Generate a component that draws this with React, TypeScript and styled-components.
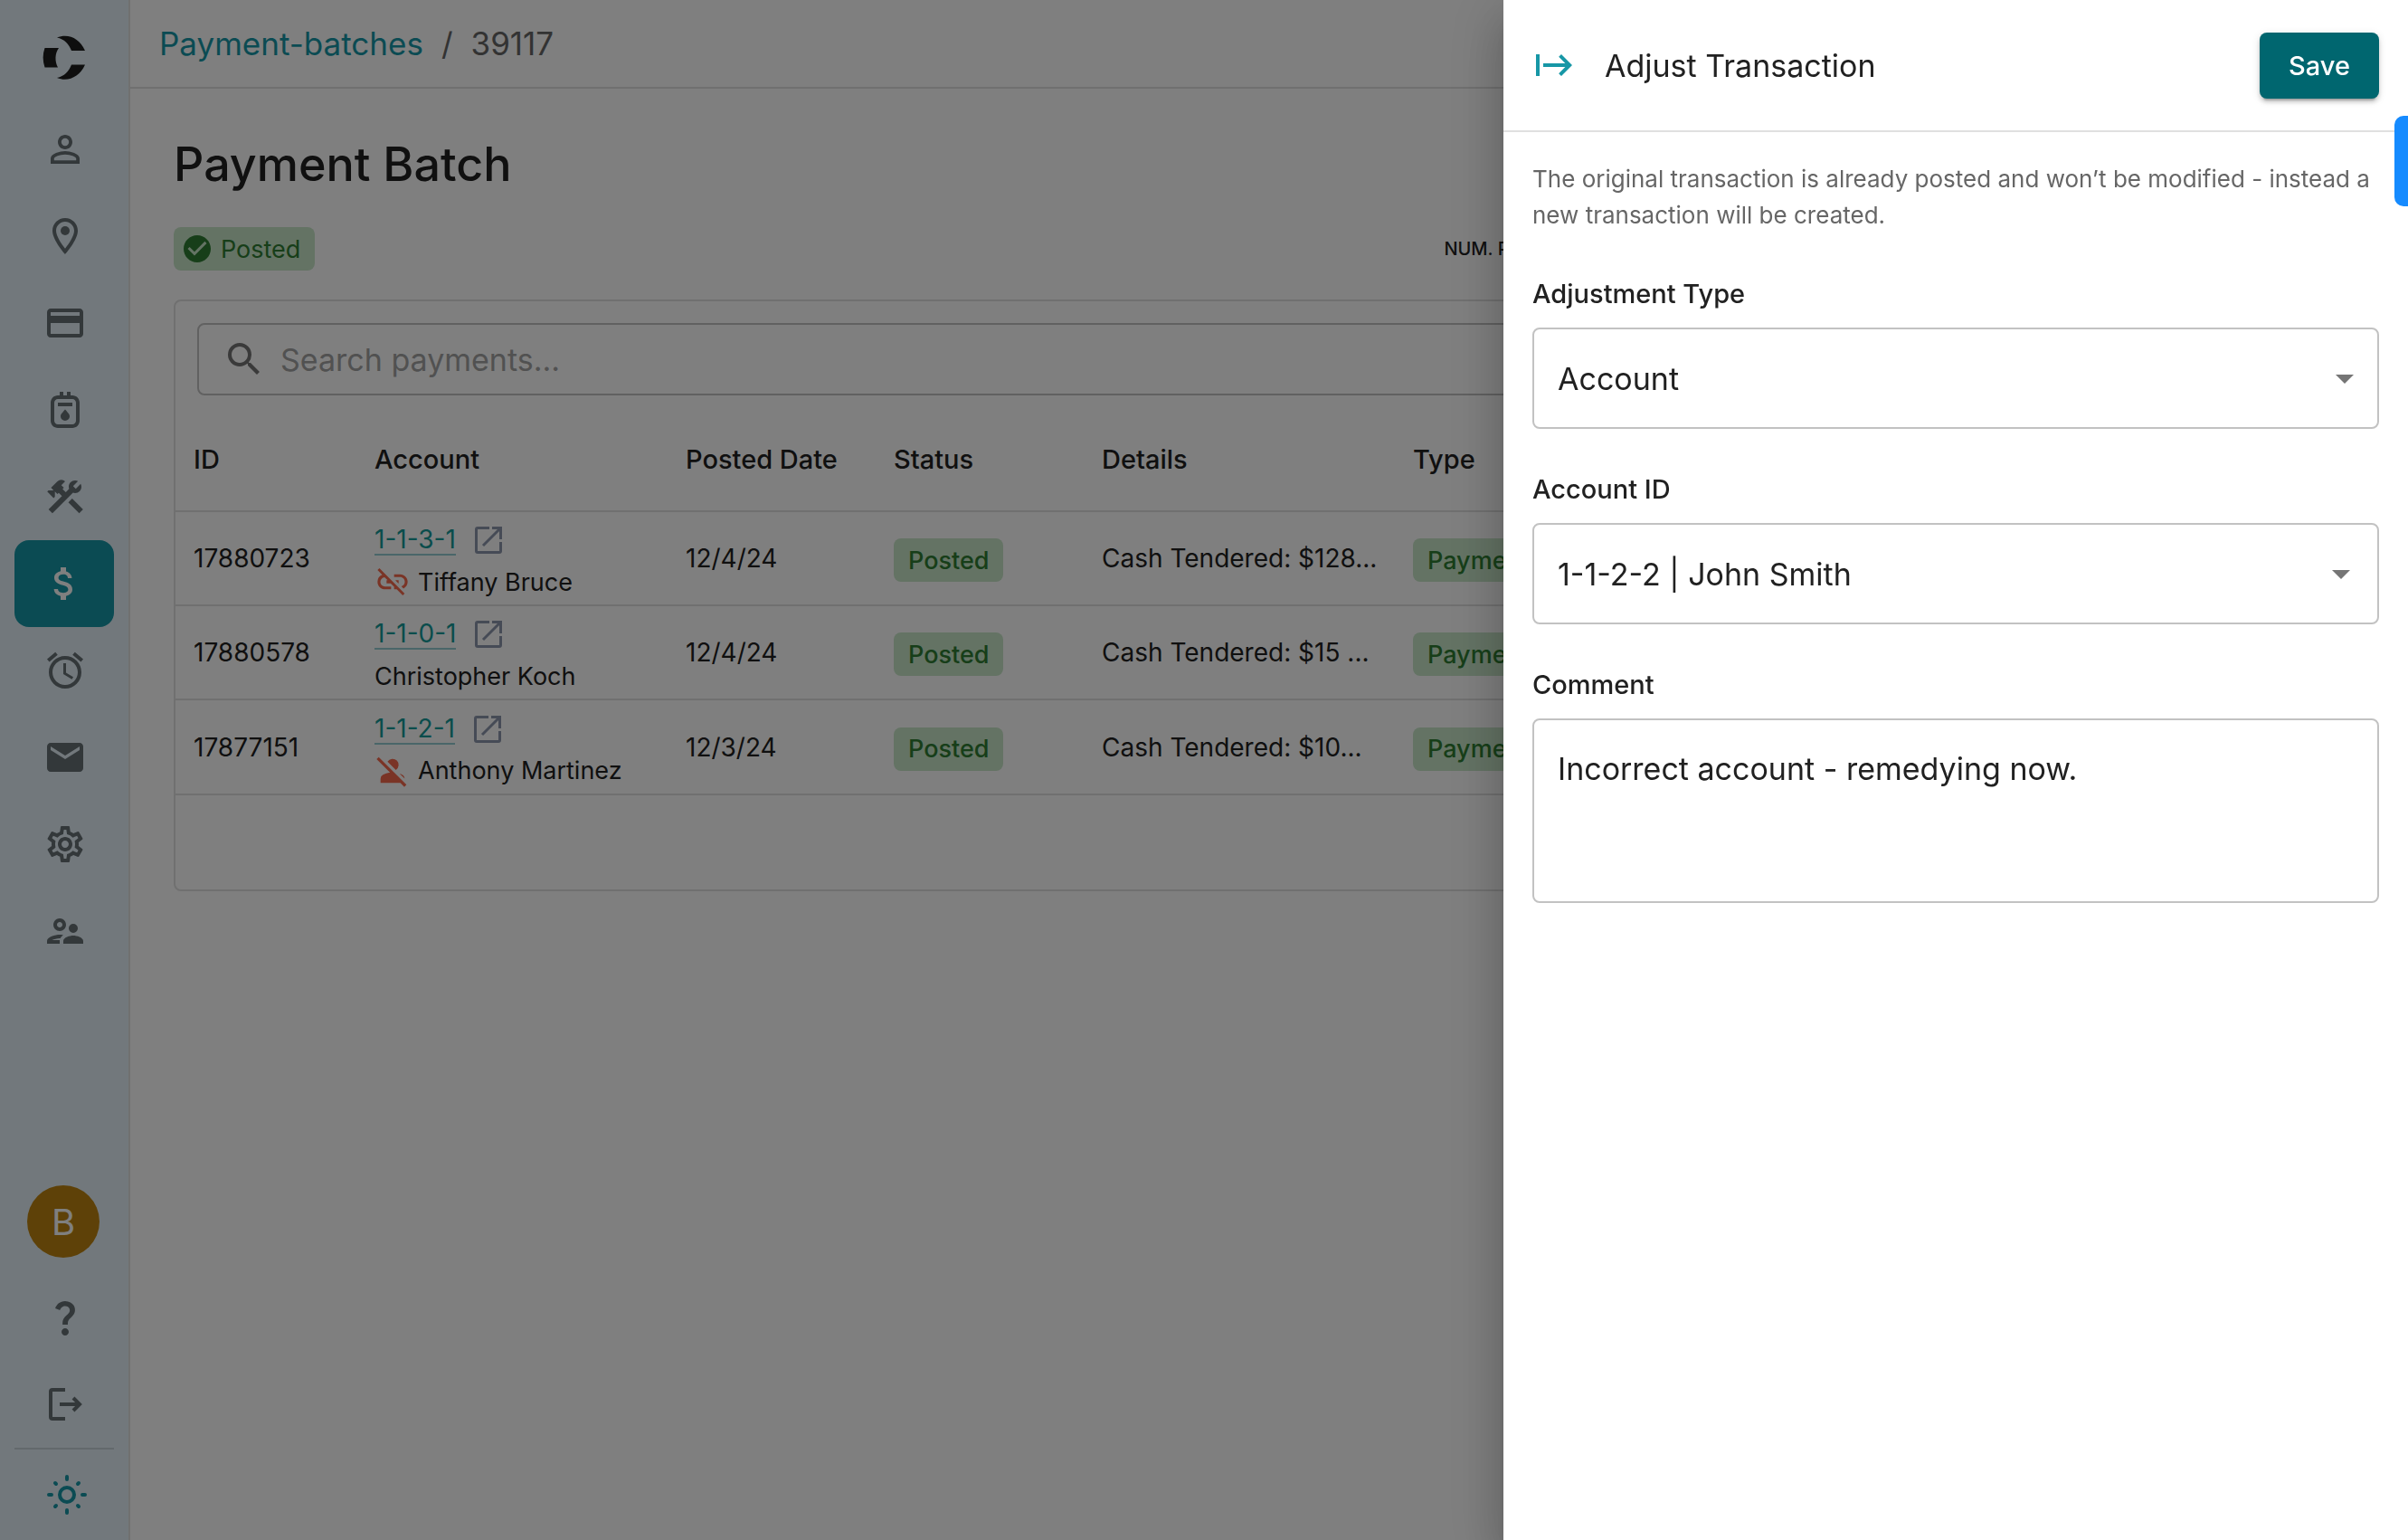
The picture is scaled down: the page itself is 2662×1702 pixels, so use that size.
import React, { useState } from "react";
import styled, { createGlobalStyle } from "styled-components";
import {
  MdPersonOutline,
  MdOutlineLocationOn,
  MdPayment,
  MdOutlineGasMeter,
  MdConstruction,
  MdAttachMoney,
  MdAlarm,
  MdEmail,
  MdOutlineSettings,
  MdOutlineSupervisorAccount,
  MdQuestionMark,
  MdSearch,
  MdCheckCircle,
  MdStart,
  MdLinkOff,
  MdPersonOff,
  MdArrowDropDown,
} from "react-icons/md";

const color = {
  text: "#212121",
  muted: "#666666",
  teal: "#1797a6",
  tealDark: "#00666f",
  link: "#149a98",
  line: "#e0e0e0",
  input: "#c2c2c2",
  green: "#2e7d32",
  greenSoft: "#c8e6c9",
  red: "#f4694c",
};

const GlobalStyle = createGlobalStyle`
  *, *::before, *::after { box-sizing: border-box; }
  body {
    margin: 0;
    overflow: hidden;
    background: #ffffff;
    color: ${color.text};
    font-family: Inter, Roboto, "Liberation Sans", sans-serif;
    font-size: 28px;
  }
  button, input, select, textarea { font: inherit; color: inherit; }
`;

const Shell = styled.div`
  display: flex;
  height: 100vh;
`;

const Sidebar = styled.aside`
  display: flex;
  flex-direction: column;
  flex: none;
  width: 144px;
  padding: 36px 16px 2px;
  background: #e4f1f8;
  border-right: 2px solid ${color.line};
`;

const LogoLink = styled.a`
  display: flex;
  justify-content: center;
  margin-bottom: 25px;
  color: #1c1c1c;
`;

const NavList = styled.nav`
  display: flex;
  flex-direction: column;
`;

const NavButton = styled.button<{ $active?: boolean }>`
  display: flex;
  align-items: center;
  justify-content: center;
  width: 110px;
  height: 96px;
  padding: 0 0 0 ${(p) => (p.$active ? 0 : 2)}px;
  border: 0;
  border-radius: 16px;
  background: ${(p) => (p.$active ? color.teal : "transparent")};
  color: ${(p) => (p.$active ? "#ffffff" : "#667075")};
  cursor: pointer;
`;

const NavFooter = styled.div`
  display: flex;
  flex-direction: column;
  margin-top: auto;
`;

const Avatar = styled.button`
  align-self: center;
  width: 80px;
  height: 80px;
  margin: 0 2px 18px 0;
  padding: 0;
  border: 0;
  border-radius: 50%;
  background: #bd8310;
  color: #ffffff;
  font-size: 40px;
`;

const ThemeRow = styled.div`
  padding-top: 2px;
  border-top: 2px solid #c6d2d8;
  color: ${color.teal};

  ${NavButton} {
    padding-left: 6px;
    color: inherit;
  }
`;

const Main = styled.main`
  flex: 1;
  min-width: 0;
`;

const TopBar = styled.header`
  display: flex;
  align-items: center;
  height: 98px;
  padding: 0 32px;
  border-bottom: 2px solid ${color.line};
`;

const Crumbs = styled.ol`
  display: flex;
  gap: 20px;
  margin: 0;
  padding: 0;
  list-style: none;
  color: ${color.muted};
  font-size: 35px;
  line-height: 48px;
`;

const CrumbLink = styled.a`
  color: ${color.teal};
  text-decoration: none;
`;

const Content = styled.div`
  padding: 48px;
`;

const PageTitle = styled.h1`
  margin: 0 0 33px;
  font-size: 52px;
  font-weight: 500;
  line-height: 72px;
`;

const SummaryRow = styled.div`
  display: flex;
  align-items: center;
  margin-bottom: 32px;
`;

const SummaryLabel = styled.span`
  margin-left: 1248px;
  font-size: 20px;
  font-weight: 500;
  text-transform: uppercase;
  white-space: nowrap;
`;

const Chip = styled.span<{ $strong?: boolean }>`
  display: inline-flex;
  align-items: center;
  gap: 8px;
  height: 48px;
  padding: 0 16px 0 ${(p) => (p.$strong ? 16 : 8)}px;
  border-radius: 8px;
  background: ${color.greenSoft};
  color: ${color.green};
  font-size: 27px;
  font-weight: ${(p) => (p.$strong ? 500 : 400)};
`;

const Card = styled.section`
  border: 2px solid ${color.line};
  border-radius: 8px;
`;

const SearchBox = styled.label`
  display: flex;
  align-items: center;
  gap: 16px;
  height: 80px;
  margin: 24px 24px 32px;
  padding: 0 26px;
  border: 2px solid ${color.input};
  border-radius: 8px;
  color: #757575;
`;

const SearchInput = styled.input`
  flex: 1;
  padding: 0;
  border: 0;
  outline: 0;
  background: transparent;
  font-size: 34px;

  &::placeholder {
    color: #a3a3a3;
    opacity: 1;
  }
`;

const Table = styled.table`
  width: 100%;
  border-collapse: collapse;
  table-layout: fixed;
`;

const Th = styled.th<{ $width?: number }>`
  width: ${(p) => (p.$width ? `${p.$width}px` : "auto")};
  height: 96px;
  padding: 0 20px 18px;
  text-align: left;
  font-size: 29px;
  font-weight: 500;
`;

const Tr = styled.tr`
  height: 104px;
  border-top: 2px solid ${color.line};
`;

const Td = styled.td<{ $drop?: number }>`
  padding: ${(p) => p.$drop ?? 0}px 20px 0;
  white-space: nowrap;
`;

const CardFooter = styled.footer`
  height: 106px;
  border-top: 2px solid ${color.line};
`;

const Stack = styled.div`
  display: flex;
  flex-direction: column;
`;

const Line = styled.div<{ $small?: boolean }>`
  display: flex;
  align-items: center;
  gap: ${(p) => (p.$small ? 8 : 20)}px;
  height: 46px;
  font-size: ${(p) => (p.$small ? 27 : 28)}px;

  a {
    color: ${color.link};
    text-decoration: none;
    border-bottom: 2px solid #95ccd3;
    line-height: 32px;
  }
`;

const LinkButton = styled.button`
  display: flex;
  padding: 0;
  border: 0;
  background: none;
  color: #8d97ac;
`;

const Flag = styled.span`
  display: flex;
  width: 40px;
  color: ${color.red};
`;

const Backdrop = styled.div`
  position: fixed;
  inset: 0;
  display: flex;
  justify-content: flex-end;
  background: rgba(0, 0, 0, 0.5);
`;

const Drawer = styled.form`
  width: 1000px;
  height: 100%;
  background: #ffffff;
  box-shadow: 0 16px 20px -10px rgba(0, 0, 0, 0.2),
    0 32px 48px 4px rgba(0, 0, 0, 0.14), 0 12px 60px 10px rgba(0, 0, 0, 0.12);
`;

const DrawerHeader = styled.header`
  display: flex;
  align-items: center;
  height: 146px;
  padding: 0 32px;
  border-bottom: 2px solid ${color.line};
`;

const CloseButton = styled.button`
  display: flex;
  margin-right: 32px;
  padding: 0;
  border: 0;
  background: none;
  color: ${color.teal};
`;

const DrawerTitle = styled.h2`
  flex: 1;
  margin: 0;
  font-size: 34px;
  font-weight: 400;
`;

const SaveButton = styled.button`
  height: 73px;
  padding: 0 32px;
  border: 0;
  border-radius: 8px;
  background: ${color.tealDark};
  color: #ffffff;
  font-size: 29px;
  font-weight: 500;
  box-shadow: 0 6px 2px -4px rgba(0, 0, 0, 0.2),
    0 4px 4px rgba(0, 0, 0, 0.14), 0 2px 10px rgba(0, 0, 0, 0.12);
`;

const DrawerBody = styled.div`
  display: flex;
  flex-direction: column;
  gap: 46px;
  padding: 32px;
`;

const Note = styled.p`
  margin: 0;
  color: ${color.muted};
  font-size: 26px;
  line-height: 40px;
`;

const Field = styled.div`
  display: flex;
  flex-direction: column;
  gap: 16px;
`;

const Label = styled.label`
  font-size: 29px;
  font-weight: 500;
  line-height: 42px;
`;

const SelectWrap = styled.div<{ $inset?: number }>`
  display: grid;
  align-items: center;

  > * {
    grid-area: 1 / 1;
  }

  svg {
    justify-self: end;
    margin-right: ${(p) => p.$inset ?? 14}px;
    color: #757575;
    pointer-events: none;
  }
`;

const Select = styled.select`
  width: 100%;
  height: 112px;
  padding: 0 26px;
  border: 2px solid ${color.input};
  border-radius: 8px;
  background: transparent;
  font-size: 34px;
  appearance: none;
`;

const TextArea = styled.textarea`
  width: 100%;
  height: 204px;
  padding: 30px 26px;
  border: 2px solid ${color.input};
  border-radius: 8px;
  font-size: 34px;
  line-height: 48px;
  resize: none;
`;

const EdgeTab = styled.button`
  position: fixed;
  top: 128px;
  right: 0;
  width: 15px;
  height: 100px;
  padding: 0;
  border: 0;
  border-radius: 10px 0 0 10px;
  background: #168bff;
`;

const Logo = () => (
  <svg width="52" height="56" viewBox="0 0 52 56" aria-hidden="true">
    <path
      fill="currentColor"
      d="M18 5.500C30 .5 43 6 49 20H34C31 12 26 7.500 18 5.500ZM4.500 17H20C15.500 23 15.500 32 19 38.500H4.500C2 31 2 24 4.500 17ZM34 35.500H49C43 49 30 55 18 50C26 48 31 43.500 34 35.500Z"
    />
  </svg>
);

const LogoutIcon = () => (
  <svg width="48" height="48" viewBox="0 0 48 48" fill="none" stroke="currentColor" strokeWidth="4" aria-hidden="true">
    <path d="M24 8H10Q8 8 8 10V38Q8 40 10 40H24M18 24H40M33 17L40 24L33 31" />
  </svg>
);

const SunIcon = () => (
  <svg width="48" height="48" viewBox="0 0 48 48" fill="none" stroke="currentColor" strokeWidth="4" strokeLinecap="round" aria-hidden="true">
    <circle cx="24" cy="24" r="8" />
    <path d="M24 4V7M24 41V44M4 24H7M41 24H44M11 11L12 12M36 36L37 37M37 11L36 12M12 36L11 37" />
  </svg>
);

const OpenIcon = () => (
  <svg width="32" height="32" viewBox="0 0 32 32" fill="none" stroke="currentColor" strokeWidth="3" aria-hidden="true">
    <path d="M17 2.500H4Q2.500 2.500 2.500 4V28Q2.500 29.500 4 29.500H28Q29.500 29.500 29.500 28V18M20 2.500H29.500V15M29 3L10 22" />
  </svg>
);

const navItems = [
  { name: "People", Icon: MdPersonOutline },
  { name: "Locations", Icon: MdOutlineLocationOn },
  { name: "Accounts", Icon: MdPayment },
  { name: "Meters", Icon: MdOutlineGasMeter },
  { name: "Service", Icon: MdConstruction },
  { name: "Payments", Icon: MdAttachMoney },
  { name: "Schedules", Icon: MdAlarm },
  { name: "Messages", Icon: MdEmail },
  { name: "Settings", Icon: MdOutlineSettings },
  { name: "Users", Icon: MdOutlineSupervisorAccount },
];

const columns = [
  { name: "ID", width: 200 },
  { name: "Account", width: 344 },
  { name: "Posted Date", width: 230 },
  { name: "Status", width: 230 },
  { name: "Details", width: 344 },
  { name: "Type" },
];

const payments = [
  { id: "17880723", account: "1-1-3-1", person: "Tiffany Bruce", Icon: MdLinkOff, date: "12/4/24", details: "Cash Tendered: $128..." },
  { id: "17880578", account: "1-1-0-1", person: "Christopher Koch", Icon: null, date: "12/4/24", details: "Cash Tendered: $15 ..." },
  { id: "17877151", account: "1-1-2-1", person: "Anthony Martinez", Icon: MdPersonOff, date: "12/3/24", details: "Cash Tendered: $10..." },
];

export default function App() {
  const [comment, setComment] = useState("Incorrect account - remedying now.");

  return (
    <>
      <GlobalStyle />
      <Shell>
        <Sidebar>
          <LogoLink href="#" aria-label="Home">
            <Logo />
          </LogoLink>
          <NavList>
            {navItems.map(({ name, Icon }) => (
              <NavButton key={name} $active={name === "Payments"} aria-label={name}>
                <Icon size={48} />
              </NavButton>
            ))}
          </NavList>
          <NavFooter>
            <Avatar aria-label="Profile">B</Avatar>
            <NavButton aria-label="Help">
              <MdQuestionMark size={48} />
            </NavButton>
            <NavButton aria-label="Log out">
              <LogoutIcon />
            </NavButton>
            <ThemeRow>
              <NavButton aria-label="Theme">
                <SunIcon />
              </NavButton>
            </ThemeRow>
          </NavFooter>
        </Sidebar>
        <Main>
          <TopBar>
            <Crumbs>
              <li>
                <CrumbLink href="#">Payment-batches</CrumbLink>
              </li>
              <li aria-hidden="true">/</li>
              <li>39117</li>
            </Crumbs>
          </TopBar>
          <Content>
            <PageTitle>Payment Batch</PageTitle>
            <SummaryRow>
              <Chip>
                <MdCheckCircle size={36} />
                Posted
              </Chip>
              <SummaryLabel>Num. Payments</SummaryLabel>
            </SummaryRow>
            <Card>
              <SearchBox>
                <MdSearch size={48} />
                <SearchInput placeholder="Search payments..." aria-label="Search payments" />
              </SearchBox>
              <Table>
                <thead>
                  <tr>
                    {columns.map((c) => (
                      <Th key={c.name} $width={c.width}>
                        {c.name}
                      </Th>
                    ))}
                  </tr>
                </thead>
                <tbody>
                  {payments.map(({ id, account, person, Icon, date, details }) => (
                    <Tr key={id}>
                      <Td>{id}</Td>
                      <Td $drop={6}>
                        <Stack>
                          <Line>
                            <a href="#">{account}</a>
                            <LinkButton aria-label={`Open ${account}`}>
                              <OpenIcon />
                            </LinkButton>
                          </Line>
                          <Line $small>
                            {Icon && (
                              <Flag>
                                <Icon size={40} />
                              </Flag>
                            )}
                            {person}
                          </Line>
                        </Stack>
                      </Td>
                      <Td>{date}</Td>
                      <Td $drop={4}>
                        <Chip $strong>Posted</Chip>
                      </Td>
                      <Td>{details}</Td>
                      <Td $drop={4}>
                        <Chip $strong>Payment</Chip>
                      </Td>
                    </Tr>
                  ))}
                </tbody>
              </Table>
              <CardFooter />
            </Card>
          </Content>
        </Main>
      </Shell>
      <Backdrop>
        <Drawer onSubmit={(e) => e.preventDefault()}>
          <DrawerHeader>
            <CloseButton type="button" aria-label="Close">
              <MdStart size={48} />
            </CloseButton>
            <DrawerTitle>Adjust Transaction</DrawerTitle>
            <SaveButton type="submit">Save</SaveButton>
          </DrawerHeader>
          <DrawerBody>
            <Note>
              The original transaction is already posted and won’t be modified - instead a new
              transaction will be created.
            </Note>
            <Field>
              <Label htmlFor="type">Adjustment Type</Label>
              <SelectWrap>
                <Select id="type">
                  <option>Account</option>
                </Select>
                <MdArrowDropDown size={48} />
              </SelectWrap>
            </Field>
            <Field>
              <Label htmlFor="account">Account ID</Label>
              <SelectWrap $inset={18}>
                <Select id="account">
                  <option>1-1-2-2 | John Smith</option>
                </Select>
                <MdArrowDropDown size={48} />
              </SelectWrap>
            </Field>
            <Field>
              <Label htmlFor="comment">Comment</Label>
              <TextArea id="comment" value={comment} onChange={(e) => setComment(e.target.value)} />
            </Field>
          </DrawerBody>
        </Drawer>
      </Backdrop>
      <EdgeTab aria-label="Open widget" />
    </>
  );
}
